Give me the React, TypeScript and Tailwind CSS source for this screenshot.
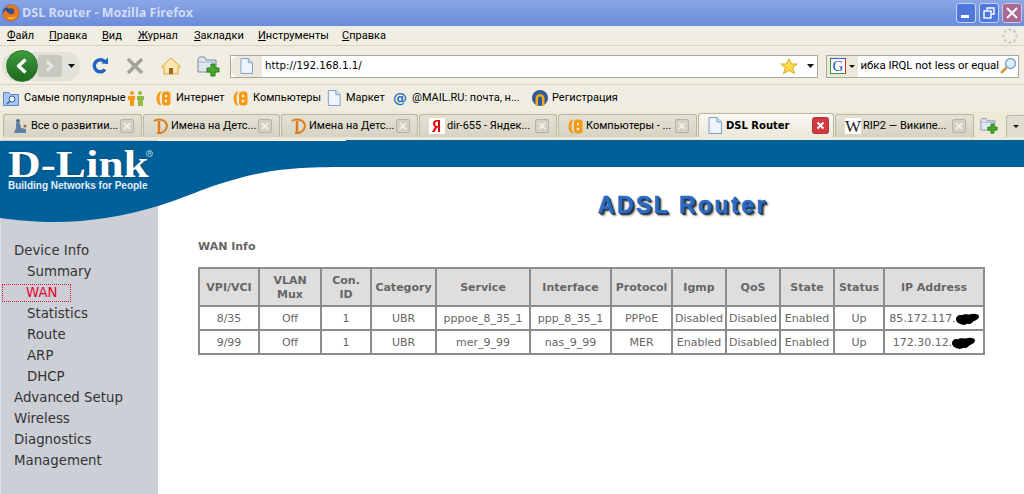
import React from "react";

const chrome = "font-['Roboto','Noto_Sans',sans-serif]";

function Firefox() {
  return (
    <svg width="18" height="18" viewBox="0 0 18 18">
      <circle cx="9" cy="9" r="8.5" fill="#33518f" />
      <path d="M2 5 C4 1 9 0 12 1 C16 3 18 7 17 11 C16 15 12 17.5 8 17 C4 16.5 1 14 1 10 C1 8 3 7 3 6 C5 7 5 9 8 10 C11 11 13 9 12 6 C11 4 8 4 7 5 C6 3 4 3 2 5 Z" fill="#e8791c" />
      <path d="M5 14 C8 16 13 15 15 11 C14 13 10 14 8 13 Z" fill="#f9c23c" />
    </svg>
  );
}

function PageIcon({ w = 14, h = 17 }: { w?: number; h?: number }) {
  return (
    <svg width={w} height={h} viewBox="0 0 14 17">
      <path d="M1 .5H9L13.5 5V16.5H1Z" fill="#eef4fd" stroke="#7d9cc9" />
      <path d="M9 .5V5H13.5" fill="#cfdff4" stroke="#7d9cc9" />
    </svg>
  );
}

function OrangeIcon() {
  return (
    <svg width="15" height="15" viewBox="0 0 15 15">
      <path d="M4 .5C1.5 2 .5 4.5.5 7.5S1.5 13 4 14.5H5.5C4 12 3.5 10 3.5 7.5S4 3 5.5.5Z" fill="#f59a12" />
      <rect x="6" y="0.5" width="8.5" height="14" rx="3" fill="#f59a12" />
      <circle cx="10" cy="5" r="1.2" fill="#fff" />
      <circle cx="10" cy="10" r="1.2" fill="#fff" />
    </svg>
  );
}

function DIcon() {
  return (
    <svg width="16" height="16" viewBox="0 0 16 16" fill="none">
      <path d="M1 3C4 .8 9 .8 12 3.5C15.5 7 14 13 8 15H4" stroke="#dd7a1c" strokeWidth="2" />
      <path d="M6 3V14" stroke="#dd7a1c" strokeWidth="2.4" />
    </svg>
  );
}

function BabyIcon() {
  return (
    <svg width="16" height="16" viewBox="0 0 16 16">
      <circle cx="5" cy="3" r="2" fill="#4d6c92" />
      <path d="M3 5H7L8 10L13 11V15H1L3 10Z" fill="#5e7ea6" />
      <circle cx="12" cy="8" r="1.6" fill="#a76b5d" />
    </svg>
  );
}

function YaIcon() {
  return (
    <svg width="16" height="16" viewBox="0 0 16 16">
      <rect width="16" height="16" fill="#fff" />
      <path d="M11 2V14H9V9.5H8L5.5 14H3L6 9C4.5 8.3 4 7 4 5.6C4 3.2 5.8 2 8 2ZM9 3.6H8.2C7 3.6 6.2 4.3 6.2 5.7S7 8 8.2 8H9Z" fill="#e60000" />
    </svg>
  );
}

function WIcon() {
  return (
    <span className="flex h-4 w-4 items-center justify-center bg-white font-['Liberation_Serif',serif] text-[17px] leading-none text-[#222]">
      W
    </span>
  );
}

function GreenPlus({ folder = "big" }: { folder?: string }) {
  const big = folder === "big";
  return (
    <svg width={big ? 23 : 18} height={big ? 22 : 17} viewBox="0 0 23 22">
      <path d="M1 4V17H19V5H9L7.5 2H2.5Z" fill="#dfe7f2" stroke="#7a8698" />
      <path d="M1 7H19" stroke="#9fb2c9" />
      <path d="M14 9H18V13H22V17H18V21H14V17H10V13H14Z" fill="#46a928" stroke="#2a7a1a" />
    </svg>
  );
}

function CloseBox({ active = false }: { active?: boolean }) {
  return active ? (
    <span className="flex h-[15px] w-[15px] items-center justify-center rounded-[2px] bg-[#cf3a41] ring-1 ring-[#b4333a]">
      <svg width="9" height="9" viewBox="0 0 9 9" stroke="#fff" strokeWidth="2">
        <path d="M1.5 1.5L7.5 7.5M7.5 1.5L1.5 7.5" />
      </svg>
    </span>
  ) : (
    <span className="flex h-[14px] w-[14px] shrink-0 items-center justify-center rounded-[2px] border border-[#b4b2a6] bg-[#d4d2c6]">
      <svg width="8" height="8" viewBox="0 0 8 8" stroke="#f4f3ec" strokeWidth="1.6">
        <path d="M1 1L7 7M7 1L1 7" />
      </svg>
    </span>
  );
}

function Tab({
  width,
  icon,
  label,
  active = false,
}: {
  width: string;
  icon: React.ReactNode;
  label: string;
  active?: boolean;
}) {
  return (
    <div
      className={`${width} flex shrink-0 items-center rounded-t-[3px] border border-b-0 border-[#b9b6a4] pl-[9px] ${
        active
          ? "h-[24px] bg-gradient-to-b from-[#f9f8f2] to-[#ece9da] pr-[5px] font-bold text-black"
          : "h-[23px] bg-gradient-to-b from-[#e5e2d4] to-[#d6d3c3] pr-[7px] text-black"
      }`}
    >
      <span className="flex w-[18px] shrink-0">{icon}</span>
      <span className={`min-w-0 flex-1 whitespace-nowrap ${active ? "font-['DejaVu_Sans',sans-serif] text-[10px]" : ""}`}>{label}</span>
      <CloseBox active={active} />
    </div>
  );
}

const menuItems: [string, string, string][] = [
  ["w-[42px]", "Ф", "айл"],
  ["w-[53px]", "П", "равка"],
  ["w-[36px]", "В", "ид"],
  ["w-[56px]", "Ж", "урнал"],
  ["w-[64px]", "З", "акладки"],
  ["w-[84px]", "И", "нструменты"],
  ["w-[60px]", "С", "правка"],
];

const navItems: [string, boolean][] = [
  ["Device Info", false],
  ["Summary", true],
  ["WAN", true],
  ["Statistics", true],
  ["Route", true],
  ["ARP", true],
  ["DHCP", true],
  ["Advanced Setup", false],
  ["Wireless", false],
  ["Diagnostics", false],
  ["Management", false],
];

const headers = ["VPI/VCI", "VLAN\nMux", "Con.\nID", "Category", "Service", "Interface", "Protocol", "Igmp", "QoS", "State", "Status", "IP Address"];
const rows = [
  ["8/35", "Off", "1", "UBR", "pppoe_8_35_1", "ppp_8_35_1", "PPPoE", "Disabled", "Disabled", "Enabled", "Up", "85.172.117."],
  ["9/99", "Off", "1", "UBR", "mer_9_99", "nas_9_99", "MER", "Enabled", "Disabled", "Enabled", "Up", "172.30.12."],
];
const colWidths = ["w-[60px]", "w-[62px]", "w-[50px]", "w-[65px]", "w-[94px]", "w-[81px]", "w-[61px]", "w-[54px]", "w-[54px]", "w-[54px]", "w-[50px]", "w-[100px]"];

export default function App() {
  return (
    <div className={`flex h-[494px] w-[1024px] flex-col overflow-hidden bg-white text-[11px] text-black ${chrome}`}>
      {/* title bar */}
      <div className="flex h-[26px] shrink-0 items-center bg-gradient-to-b from-[#8ba6e6] via-[#7898e0] to-[#6c8cdb] pl-[2px] pr-[2px]">
        <Firefox />
        <span className="ml-[2px] flex-1 font-['Open_Sans',sans-serif] text-[12.5px] font-bold text-[#d3def6]">DSL Router - Mozilla Firefox</span>
        <div className="flex gap-[3px]">
          <div className="flex h-[20px] w-[20px] items-end justify-start rounded-[3px] border border-[#c8d4f4] bg-[#4f78de] pb-[4px] pl-[4px]">
            <span className="h-[3px] w-[8px] bg-white" />
          </div>
          <div className="flex h-[20px] w-[20px] items-center justify-center rounded-[3px] border border-[#c8d4f4] bg-[#4f78de]">
            <svg width="12" height="12" viewBox="0 0 12 12" fill="none" stroke="#fff" strokeWidth="1.4">
              <path d="M4 3V1H11V7H8.5" />
              <rect x="1" y="4" width="7" height="7" />
            </svg>
          </div>
          <div className="flex h-[20px] w-[20px] items-center justify-center rounded-[3px] border border-[#d4c4d8] bg-[#a8688f]">
            <svg width="12" height="12" viewBox="0 0 12 12" stroke="#fff" strokeWidth="2">
              <path d="M1 1L11 11M11 1L1 11" />
            </svg>
          </div>
        </div>
      </div>

      {/* menu */}
      <div className="flex h-[20px] shrink-0 items-center border-b border-[#d8d4be] bg-[#f0eee2] pl-[7px] pr-[5px] pt-[1px]">
        {menuItems.map(([w, first, rest]) => (
          <span key={first} className={`${w} shrink-0`}>
            <span className="underline">{first}</span>
            {rest}
          </span>
        ))}
        <div className="flex-1" />
        <svg width="18" height="18" viewBox="0 0 18 18" fill="#cfcfcf">
          <circle cx="9" cy="2.5" r="1.6" />
          <circle cx="13.6" cy="4.4" r="1.6" />
          <circle cx="15.5" cy="9" r="1.6" />
          <circle cx="13.6" cy="13.6" r="1.6" />
          <circle cx="9" cy="15.5" r="1.6" />
          <circle cx="4.4" cy="13.6" r="1.6" />
          <circle cx="2.5" cy="9" r="1.6" />
          <circle cx="4.4" cy="4.4" r="1.6" />
        </svg>
      </div>

      {/* navigation toolbar */}
      <div className="flex h-[39px] shrink-0 items-center border-b border-[#d8d4be] bg-[#f0eee2] pl-[2px] pr-[5px] pt-[2px]">
        <div className="relative flex h-[29px] w-[78px] shrink-0 items-center rounded-[14px] bg-[#e2e2da]">
          <span className="ml-[4px] flex h-[32px] w-[32px] shrink-0 items-center justify-center rounded-full border border-[#2c7a2c] bg-gradient-to-b from-[#3f9a3f] to-[#1d6a1d]">
            <svg width="16" height="18" viewBox="0 0 16 18" fill="none" stroke="#fff" strokeWidth="3.4" strokeLinejoin="round">
              <path d="M11.5 2.5L4.5 9L11.5 15.5" />
            </svg>
          </span>
          <span className="flex h-[22px] w-[24px] items-center justify-center rounded-r-[4px] bg-[#c8c8c0]">
            <svg width="10" height="12" viewBox="0 0 10 12" fill="none" stroke="#ecece6" strokeWidth="2.6">
              <path d="M2 1.5L7 6L2 10.5" />
            </svg>
          </span>
          <svg className="ml-[6px]" width="7" height="4" viewBox="0 0 7 4">
            <path d="M0 0H7L3.5 4Z" fill="#111" />
          </svg>
        </div>
        <svg className="ml-[11px]" width="18" height="20" viewBox="0 0 18 20" fill="none">
          <path d="M14 13.5A6 6 0 1 1 13.5 5.5" stroke="#1f64c4" strokeWidth="3.4" />
          <path d="M10.5 7.5L17 8V1.5Z" fill="#1f64c4" />
        </svg>
        <svg className="ml-[17px]" width="18" height="18" viewBox="0 0 18 18" stroke="#a3a39d" strokeWidth="3.6">
          <path d="M2 2L16 16M16 2L2 16" />
        </svg>
        <svg className="ml-[17px]" width="20" height="18" viewBox="0 0 20 18">
          <path d="M10 1L19.5 10H17V17H3V10H.5Z" fill="#f9e8b0" stroke="#e2a32a" />
          <rect x="8" y="11" width="4" height="6" fill="#a5652a" />
        </svg>
        <span className="ml-[16px] flex">
          <GreenPlus />
        </span>
        <div className="ml-[10px] flex h-[23px] w-[588px] shrink-0 items-center border border-[#aaa89a] bg-white">
          <span className="flex h-full w-[31px] shrink-0 items-center justify-center rounded-l-[8px] bg-[#ece9da]">
            <PageIcon w={13} h={16} />
          </span>
          <span className="ml-[3px] flex-1 font-['DejaVu_Sans',sans-serif] text-[10.25px]">http://192.168.1.1/</span>
          <svg width="18" height="17" viewBox="0 0 18 17">
            <path d="M9 .8L11.5 6H17.2L12.7 9.6L14.4 15.6L9 12.4L3.6 15.6L5.3 9.6L.8 6H6.5Z" fill="#fcd94a" stroke="#d8a828" />
          </svg>
          <svg className="ml-[9px] mr-[3px]" width="7" height="4" viewBox="0 0 7 4">
            <path d="M0 0H7L3.5 4Z" fill="#111" />
          </svg>
        </div>
        <div className="ml-[8px] flex h-[23px] min-w-0 flex-1 items-center border border-[#aaa89a] bg-white">
          <span className="flex h-full w-[31px] shrink-0 items-center gap-[3px] bg-[#ece9da] pl-[3px]">
            <span className="flex h-[16px] w-[16px] shrink-0 items-center justify-center border border-[#2a9a3a] border-r-[#d02a2a] border-t-[#3060d0] bg-white font-['Liberation_Serif',serif] text-[15px] leading-none text-[#1e4fc4]">
              G
            </span>
            <svg width="6" height="3" viewBox="0 0 6 3" className="shrink-0">
              <path d="M0 0H6L3 3Z" fill="#111" />
            </svg>
          </span>
          <span className="flex min-w-0 flex-1 justify-end whitespace-nowrap text-[11.4px]">ибка IRQL not less or equal</span>
          <svg className="mr-[1px] shrink-0" width="18" height="18" viewBox="0 0 18 18" fill="none">
            <circle cx="11.5" cy="6.5" r="5" fill="#dcecfb" stroke="#7aa3cf" strokeWidth="1.4" />
            <path d="M7.5 10.5L2 16" stroke="#d99a3a" strokeWidth="2.6" />
          </svg>
        </div>
      </div>

      {/* bookmarks */}
      <div className="flex h-[26px] shrink-0 items-center whitespace-nowrap bg-[#f0eee2] pl-[3px]">
        <svg width="16" height="15" viewBox="0 0 16 15" className="shrink-0">
          <path d="M.5 1.5H6L7.5 3.5H15.5V14.5H.5Z" fill="#a9c6ee" stroke="#5f86c2" />
          <circle cx="9" cy="8" r="3" fill="#eaf2fc" stroke="#3a63a8" />
          <path d="M7 10L4 13" stroke="#3a63a8" strokeWidth="1.6" />
        </svg>
        <span className="ml-[5px] w-[104px] shrink-0">Самые популярные</span>
        <svg width="16" height="15" viewBox="0 0 16 15" className="shrink-0">
          <circle cx="4" cy="2" r="2" fill="#f59a12" />
          <path d="M0 5H7V9H6V15H2V9H0Z" fill="#f59a12" />
          <circle cx="12" cy="2" r="2" fill="#93b948" />
          <path d="M9 5H16V9H15V15H10V9H9Z" fill="#93b948" />
        </svg>
        <span className="ml-[12px] shrink-0"><OrangeIcon /></span>
        <span className="ml-[5px] w-[57px] shrink-0">Интернет</span>
        <OrangeIcon />
        <span className="ml-[5px] w-[74px] shrink-0">Компьютеры</span>
        <PageIcon w={14} h={16} />
        <span className="ml-[5px] w-[47px] shrink-0">Маркет</span>
        <span className="flex h-[14px] w-[14px] shrink-0 items-center justify-center font-['DejaVu_Sans',sans-serif] text-[14px] font-bold leading-none text-[#2a6bc0]">@</span>
        <span className="ml-[5px] w-[120px] shrink-0">@MAIL.RU: почта, н...</span>
        <svg width="16" height="16" viewBox="0 0 16 16" className="shrink-0">
          <circle cx="8" cy="8" r="8" fill="#2f5a94" />
          <path d="M3.5 16V8.5A4.5 4.5 0 0 1 12.5 8.5V16H10V8.5A2 2 0 0 0 6 8.5V16Z" fill="#f2a81e" />
        </svg>
        <span className="ml-[4px] shrink-0">Регистрация</span>
      </div>

      {/* tabs */}
      <div className="flex h-[29px] shrink-0 items-end bg-[#ece9d8] pb-[3px] pl-[3px]">
        <div className="flex items-end gap-[1px]">
          <Tab width="w-[139px]" icon={<BabyIcon />} label="Все о развитии..." />
          <Tab width="w-[137px]" icon={<DIcon />} label="Имена на Детс..." />
          <Tab width="w-[137px]" icon={<DIcon />} label="Имена на Детс..." />
          <Tab width="w-[138px]" icon={<YaIcon />} label="dir-655 - Яндек..." />
          <Tab width="w-[139px]" icon={<OrangeIcon />} label="Компьютеры - ..." />
          <Tab width="w-[136px]" icon={<PageIcon />} label="DSL Router" active />
          <Tab width="w-[139px]" icon={<WIcon />} label="RIP2 — Википе..." />
        </div>
        <span className="mb-[3px] ml-[6px] flex shrink-0">
          <GreenPlus folder="small" />
        </span>
        <span className="ml-[8px] flex h-[22px] w-[18px] shrink-0 items-center justify-center rounded-tl-[3px] border-l border-t border-[#b9b6a4] bg-[#e0ddcf]">
          <svg width="6" height="3" viewBox="0 0 6 3">
            <path d="M0 0H6L3 3Z" fill="#111" />
          </svg>
        </span>
      </div>

      {/* router page */}
      <div className="relative flex min-h-0 flex-1 font-['DejaVu_Sans',sans-serif]">
        <svg className="absolute left-0 top-0" width="1024" height="83" viewBox="0 0 1024 83">
          <path d="M0 1H346V0H1024V27H346C300 27 272 29 240 38C205 47 185 58 158 66C125 76 90 82 55 82C35 82 15 80 0 78Z" fill="#00619a" />
        </svg>
        <div className="absolute left-[8px] top-[10px] text-white">
          <div className="flex items-start">
            <span className="origin-left scale-x-[1.19] font-['Liberation_Serif',serif] text-[38px] font-bold leading-[28px] [text-shadow:0_0_2px_#0a3a5c]">D-Link</span>
            <span className="ml-[20px] flex h-[7px] w-[7px] items-center justify-center rounded-full border border-[#9cc] text-[5px] leading-none text-[#cde]">R</span>
          </div>
          <div className="mt-[1px] whitespace-nowrap font-['Liberation_Sans',sans-serif] text-[10px] font-bold leading-[14px] text-[#e4eef6]">Building Networks for People</div>
        </div>

        <nav className="flex w-[158px] shrink-0 flex-col border-l border-[#dfe0e5] bg-[#cdcfd7] pt-[100px] text-[13.33px] text-[#333]">
          {navItems.map(([label, sub]) => (
            <div
              key={label}
              className={`flex h-[21px] items-center ${sub ? "pl-[26px]" : "pl-[13px]"}`}
            >
              {label === "WAN" ? (
                <span className="-ml-[25px] flex h-[18px] w-[69px] items-center border border-dotted border-[#e8002e] pl-[23px] text-[#e8002e]">WAN</span>
              ) : (
                label
              )}
            </div>
          ))}
        </nav>

        <main className="flex min-w-0 flex-1 flex-col pl-[40px] text-[11px] text-[#666]">
          <div className="flex justify-end pr-[256px] pt-[52px]">
            <h1 className="font-['Liberation_Sans',sans-serif] text-[23px] font-bold leading-[26px] tracking-[2.5px] text-[#2a6cc4] [-webkit-text-stroke:0.6px_#2a6cc4] [text-shadow:1px_1px_0_#14365f,2px_2px_1px_#333,3px_3px_2px_#999]">
              ADSL Router
            </h1>
          </div>
          <div className="mt-[21px] text-[11px] font-bold leading-[16px] text-[#666]">WAN Info</div>
          <table className="mt-[12px] w-[785px] table-fixed border-collapse border-2 border-[#7c7c7c] text-center">
            <colgroup>
              {colWidths.map((w, i) => (
                <col key={i} className={w} />
              ))}
            </colgroup>
            <thead>
              <tr className="h-[38px] bg-[#dedede]">
                {headers.map((h) => (
                  <th key={h} className="whitespace-pre-line border-2 border-[#8c8c8c] px-0 pt-[2px] font-bold leading-[14px] text-[#666]">
                    {h}
                  </th>
                ))}
              </tr>
            </thead>
            <tbody>
              {rows.map((r) => (
                <tr key={r[0]} className="h-[24px]">
                  {r.map((c, i) => (
                    <td key={i} className="whitespace-nowrap border-2 border-[#8c8c8c] p-0 pt-[2px] font-normal text-[#666]">
                      {i === 11 ? (
                        <span className="flex items-center justify-center">
                          {c}
                          <svg width="23" height="13" viewBox="0 0 24 13" className="shrink-0">
                            <path d="M0 6C0 3 3 1 6 2C9 0 12 2 15 1C18 0 23 0 24 3C24 6 21 7 19 8C17 9 16 12 12 11C9 13 6 12 4 11C1 10 0 8 0 6Z" fill="#000" />
                          </svg>
                        </span>
                      ) : (
                        c
                      )}
                    </td>
                  ))}
                </tr>
              ))}
            </tbody>
          </table>
        </main>
      </div>
    </div>
  );
}
